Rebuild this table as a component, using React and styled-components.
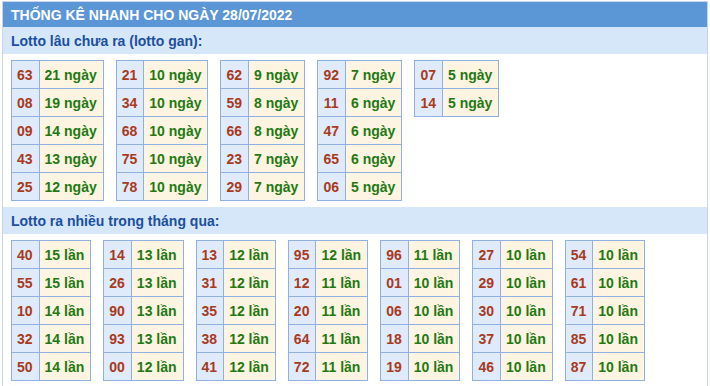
import React from 'react';
import styled, { createGlobalStyle } from 'styled-components';

const GlobalStyle = createGlobalStyle`
    body {
        margin: 0;
        background: #ffffff;
        font-family: "Liberation Sans", Arial, sans-serif;
    }
`;

const ganData = [
    [['63', 21], ['08', 19], ['09', 14], ['43', 13], ['25', 12]],
    [['21', 10], ['34', 10], ['68', 10], ['75', 10], ['78', 10]],
    [['62', 9], ['59', 8], ['66', 8], ['23', 7], ['29', 7]],
    [['92', 7], ['11', 6], ['47', 6], ['65', 6], ['06', 5]],
    [['07', 5], ['14', 5]]
];

const monthData = [
    [['40', 15], ['55', 15], ['10', 14], ['32', 14], ['50', 14]],
    [['14', 13], ['26', 13], ['90', 13], ['93', 13], ['00', 12]],
    [['13', 12], ['31', 12], ['35', 12], ['38', 12], ['41', 12]],
    [['95', 12], ['12', 11], ['20', 11], ['64', 11], ['72', 11]],
    [['96', 11], ['01', 10], ['06', 10], ['18', 10], ['19', 10]],
    [['27', 10], ['29', 10], ['30', 10], ['37', 10], ['46', 10]],
    [['54', 10], ['61', 10], ['71', 10], ['85', 10], ['87', 10]]
];

const StatTable = ({ rows, unit }) => (
    <Table>
        <tbody>
            {rows.map(([num, count]) => (
                <tr key={num}>
                    <NumCell>{num}</NumCell>
                    <ValueCell>{count} {unit}</ValueCell>
                </tr>
            ))}
        </tbody>
    </Table>
);

const App = () => {
    return (
        <>
            <GlobalStyle />
            <Box>
                <Header>THỐNG KÊ NHANH CHO NGÀY 28/07/2022</Header>
                <SubHeader>Lotto lâu chưa ra (lotto gan):</SubHeader>
                <TableRow>
                    {ganData.map((rows, i) => (
                        <StatTable key={i} rows={rows} unit="ngày" />
                    ))}
                </TableRow>
                <SubHeader>Lotto ra nhiều trong tháng qua:</SubHeader>
                <TableRow>
                    {monthData.map((rows, i) => (
                        <StatTable key={i} rows={rows} unit="lần" />
                    ))}
                </TableRow>
            </Box>
        </>
    );
};

export default App;

const Box = styled.div`
    margin: 1px 0 0 2px;
    width: 706px;
    box-sizing: border-box;
    border: 1px solid #c9d5e6;
    min-height: 400px;
`;

const Header = styled.div`
    height: 25px;
    line-height: 26px;
    padding-left: 8px;
    background: #5b96d6;
    color: #ffffff;
    font-size: 14px;
    font-weight: bold;
`;

const SubHeader = styled.div`
    height: 27px;
    line-height: 29px;
    padding-left: 8px;
    background: #d6e7fa;
    color: #1b4fa0;
    font-size: 14px;
    font-weight: bold;
`;

const TableRow = styled.div`
    display: flex;
    align-items: flex-start;
    gap: 12px;
    padding: 6px 8px 6px;
`;

const Table = styled.table`
    border-collapse: collapse;
    font-size: 14px;
    font-weight: bold;

    td {
        height: 27px;
        padding: 0 6px 0 5px;
        border: 1px solid #8fb0e0;
        white-space: nowrap;
        vertical-align: middle;
    }
`;

const NumCell = styled.td`
    background: #dfebfb;
    color: #a83a1d;
    text-align: center;
`;

const ValueCell = styled.td`
    background: #fef4e2;
    color: #1f7a14;
`;
